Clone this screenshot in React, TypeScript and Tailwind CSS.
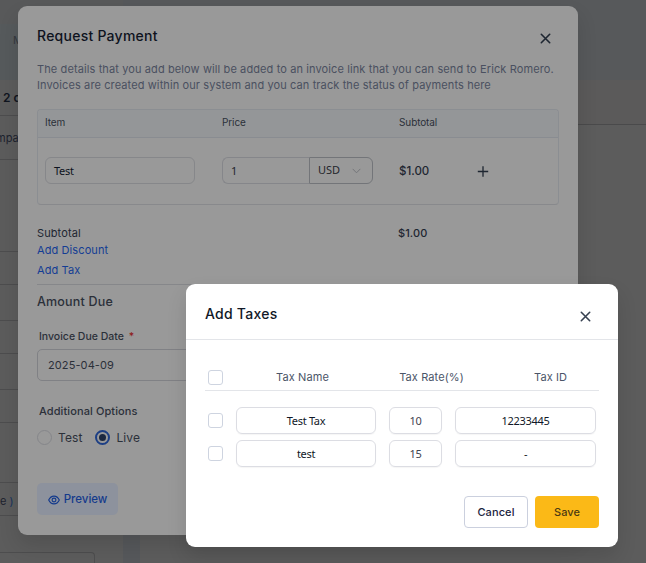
import { useState } from 'react'
import type { ReactNode } from 'react'

interface Tax {
  id: number
  name: string
  rate: string
  taxId: string
}

const TAXES: Tax[] = [
  { id: 1, name: 'Test Tax', rate: '10', taxId: '12233445' },
  { id: 2, name: 'test', rate: '15', taxId: '-' },
]

function CloseIcon() {
  return (
    <svg width="11" height="11" viewBox="0 0 11 11" fill="none" stroke="currentColor" strokeWidth="1.6" strokeLinecap="round">
      <path d="M1.3 1.3l8.4 8.4M9.7 1.3l-8.4 8.4" />
    </svg>
  )
}

function PlusIcon() {
  return (
    <svg width="12" height="11" viewBox="0 0 12 11" fill="none" stroke="currentColor" strokeWidth="1.3">
      <path d="M6 0.3v10.4M0.8 5.5h10.4" />
    </svg>
  )
}

function ChevronIcon() {
  return (
    <svg width="9" height="6" viewBox="0 0 9 6" fill="none" stroke="currentColor" strokeWidth="1">
      <path d="M0.7 0.9l3.8 3.9 3.8-3.9" />
    </svg>
  )
}

function EyeIcon() {
  return (
    <svg width="12" height="10" viewBox="0 0 12 10" fill="none" stroke="currentColor" strokeWidth="1.15">
      <path d="M0.7 5C1.9 2.4 3.7 1.1 6 1.1S10.1 2.4 11.3 5C10.1 7.6 8.3 8.9 6 8.9S1.9 7.6 0.7 5z" />
      <circle cx="6" cy="5" r="1.9" />
    </svg>
  )
}

function Backdrop() {
  return (
    <div className="flex h-[563px] w-[646px] bg-[#5c5c5c]">
      <div className="flex w-[123px] flex-col">
        <div className="h-6 bg-[#58595a]" />
        <div className="h-14 bg-[#565a5c] pt-2 pl-[13px] text-[11px] leading-4 text-[#34383e]">M</div>
        <div className="h-[36px] border-b border-[#4d4d4e] pt-[10px] pl-[3px] text-[12px] leading-4 font-semibold text-[#10151f]">
          2 c
        </div>
        <div className="h-11 border-b border-[#4d4d4e] pt-[14px] text-[11px] leading-4 text-[#1c222e]">
          <div className="-ml-[4px]">mpa</div>
        </div>
        <div className="h-[92px] border-b border-[#4d4d4e]" />
        <div className="h-[33px] border-b border-[#4d4d4e]" />
        <div className="h-9 border-b border-[#4d4d4e]" />
        <div className="h-[33px] border-b border-[#4d4d4e]" />
        <div className="h-9 border-b border-[#4d4d4e]" />
        <div className="h-[33px] border-b border-[#4d4d4e]" />
        <div className="h-[60px] border-b border-[#4d4d4e]" />
        <div className="h-[33px] border-b border-[#4d4d4e] pt-[10px] text-[11px] leading-4 text-[#1c222e]">
          e <span className="text-[#17335c]">)</span>
        </div>
        <div className="mt-9 h-[11px] w-[95px] rounded-tr-sm border-t border-r border-[#4d4d4e]" />
      </div>
      <div className="w-[17px] bg-[#56585b]" />
      <div className="flex-1">
        <div className="h-20 bg-[#57595b]" />
        <div className="h-[45px] border-b border-[#4a4a4b] bg-[#5b5a5a]" />
      </div>
    </div>
  )
}

function DimField({ children }: { children: ReactNode }) {
  return (
    <div className="flex h-[27px] w-[150px] items-center rounded-[6px] border border-[#86878a] pt-px pl-2 font-['Noto_Sans',sans-serif] text-[11px] tracking-[-0.3px] text-[#0e131e]">
      {children}
    </div>
  )
}

function Radio({ label, checked }: { label: string; checked?: boolean }) {
  return (
    <label className="flex h-[15px] items-center gap-[6px]">
      <span
        className={
          checked
            ? 'flex size-[15px] items-center justify-center rounded-full border-2 border-[#1d3f85]'
            : 'size-[15px] rounded-full border border-[#85868a]'
        }
      >
        {checked && <span className="size-[7px] rounded-full bg-[#1c2840]" />}
      </span>
      <span className="text-[12px] leading-[15px] tracking-[0.1px] text-[#2b3039]">{label}</span>
    </label>
  )
}

function RequestPaymentModal() {
  return (
    <div className="absolute top-[6px] left-[18px] h-[529px] w-[560px] rounded-[9px] bg-[#999] px-[19px] shadow-[0_10px_20px_rgba(0,0,0,0.12)]">
      <div className="flex h-[55px] items-start justify-between pt-5 pr-[8px]">
        <h1 className="text-[14px] leading-5 font-medium tracking-[0.25px] text-[#0e131e]">Request Payment</h1>
        <button className="mt-[7px] text-[#1e2631]">
          <CloseIcon />
        </button>
      </div>
      <p className="text-[11px] leading-4 tracking-[0.11px] whitespace-nowrap text-[#4a5060]">
        The details that you add below will be added to an invoice link that you can send to Erick Romero.
        <br />
        Invoices are created within our system and you can track the status of payments here
      </p>

      <div className="mt-4 h-[96px] w-[522px] rounded-[4px] border border-b-[#88898c] border-[#8b8e92]">
        <div className="grid h-7 grid-cols-[177px_177px_1fr] items-center rounded-t-[3px] border-b border-[#898c91] bg-[#949698] pb-[2px] pl-[7px] text-[10px] tracking-[-0.1px] text-[#2b3039]">
          <span>Item</span>
          <span>Price</span>
          <span>Subtotal</span>
        </div>
        <div className="grid h-[65px] grid-cols-[177px_177px_78px_1fr] items-center pl-[7px]">
          <DimField>Test</DimField>
          <div className="flex h-[27px] w-[151px] font-['Noto_Sans',sans-serif] text-[11px] text-[#23262c]">
            <div className="flex w-[87px] items-center rounded-l-[6px] border border-r-0 border-[#85868a] pt-px pl-[8px]">1</div>
            <div className="flex flex-1 items-center justify-between rounded-r-[6px] border border-[#737579] pr-[11px] pl-2 tracking-[-0.1px]">
              USD
              <span className="text-[#74767a]">
                <ChevronIcon />
              </span>
            </div>
          </div>
          <span className="pt-[2px] text-[11.5px] font-medium text-[#1e2631]">$1.00</span>
          <span className="pt-px text-[#1e2631]">
            <PlusIcon />
          </span>
        </div>
      </div>

      <div className="mt-5 grid grid-cols-[361px_1fr] text-[11px] leading-4 tracking-[0.1px] text-[#1e2631]">
        <span>Subtotal</span>
        <span className="font-medium">$1.00</span>
      </div>
      <div className="mt-px flex flex-col items-start gap-1 border-b border-[#86878a] pb-[6px] text-[11px] leading-4 tracking-[0.1px] text-[#143d94]">
        <a>Add Discount</a>
        <a>Add Tax</a>
      </div>
      <h2 className="mt-2 text-[12.5px] leading-[18px] font-medium tracking-[0.2px] text-[#2b3039]">Amount Due</h2>

      <div className="mt-[18px] pl-[2px] text-[10.5px] leading-4 font-medium text-[#2b3039]">
        Invoice Due Date <span className="ml-[2px] text-[#8f1d1d]">*</span>
      </div>
      <div className="mt-1 flex h-8 items-center rounded-[5px] border border-[#808185] pl-[10px] text-[11px] tracking-[0.1px] text-[#2b3039]">
        2025-04-09
      </div>

      <div className="mt-[22px] pl-[2px] text-[11px] leading-4 font-medium tracking-[0.1px] text-[#2b3039]">Additional Options</div>
      <div className="mt-[11px] flex gap-[13px]">
        <Radio label="Test" />
        <Radio label="Live" checked />
      </div>
      <button className="mt-[38px] flex h-8 w-[81px] items-center justify-center gap-1 rounded-[5px] bg-[#8d929d] pt-px text-[11.5px] font-medium text-[#143a8c]">
        <EyeIcon />
        Preview
      </button>
    </div>
  )
}

function Checkbox({ checked, onToggle }: { checked: boolean; onToggle: () => void }) {
  return (
    <button
      onClick={onToggle}
      className={
        checked
          ? 'size-[15px] rounded-[3px] border border-[#2563eb] bg-[#2563eb]'
          : 'size-[15px] rounded-[3px] border border-[#ced4e0] bg-white'
      }
    />
  )
}

function Field({ children }: { children: ReactNode }) {
  return (
    <div className="flex h-[27px] items-center justify-center rounded-[6px] border border-[#dcdde3] pt-px shadow-[0_1px_1px_rgba(0,0,0,0.04)]">
      {children}
    </div>
  )
}

function AddTaxesModal() {
  const [selected, setSelected] = useState<number[]>([])

  const toggle = (id: number) =>
    setSelected((cur) => (cur.includes(id) ? cur.filter((i) => i !== id) : [...cur, id]))

  const allSelected = selected.length === TAXES.length

  return (
    <div className="absolute top-[284px] left-[186px] h-[263px] w-[432px] rounded-[9px] bg-white shadow-[0_10px_20px_rgba(0,0,0,0.12)]">
      <div className="flex h-14 items-start justify-between border-b border-[#e3e5e9] pt-5 pr-[27px] pl-[19px]">
        <h1 className="text-[14px] leading-5 font-medium tracking-[0.25px] text-[#111827]">Add Taxes</h1>
        <button className="mt-[7px] text-[#374151]">
          <CloseIcon />
        </button>
      </div>

      <div className="px-[19px] pt-[25px]">
        <div className="grid h-[26px] grid-cols-[31px_127px_131px_1fr] items-center border-b border-[#e3e5e9] pl-[3px] text-[11px] tracking-[0.1px] text-[#4b5568]">
          <Checkbox checked={allSelected} onToggle={() => setSelected(allSelected ? [] : TAXES.map((t) => t.id))} />
          <span className="text-center">Tax Name</span>
          <span className="text-center">Tax Rate(%)</span>
          <span className="pl-[37px]">Tax ID</span>
        </div>

        <div className="mt-4 flex flex-col gap-[6px] pr-[3px] pl-[3px]">
          {TAXES.map((tax) => (
            <div
              key={tax.id}
              className="grid grid-cols-[15px_140px_53px_141px] items-center gap-x-[13px] font-['Noto_Sans',sans-serif] text-[11px] tracking-[-0.3px] text-[#111827]"
            >
              <Checkbox checked={selected.includes(tax.id)} onToggle={() => toggle(tax.id)} />
              <Field>{tax.name}</Field>
              <Field>
                <span className="text-[#3f4450]">{tax.rate}</span>
              </Field>
              <Field>{tax.taxId}</Field>
            </div>
          ))}
        </div>

        <div className="mt-[29px] flex justify-end gap-[7px] text-[11px] font-medium tracking-[0.1px]">
          <button className="h-8 w-16 rounded-[4px] border border-[#cbd0de] text-[#1b2440]">Cancel</button>
          <button className="h-8 w-16 rounded-[4px] bg-[#fbb917] text-[#4d3a12]">Save</button>
        </div>
      </div>
    </div>
  )
}

export default function App() {
  return (
    <div className="relative h-[563px] w-[646px] overflow-hidden font-['Inter',sans-serif]">
      <Backdrop />
      <RequestPaymentModal />
      <AddTaxesModal />
    </div>
  )
}
